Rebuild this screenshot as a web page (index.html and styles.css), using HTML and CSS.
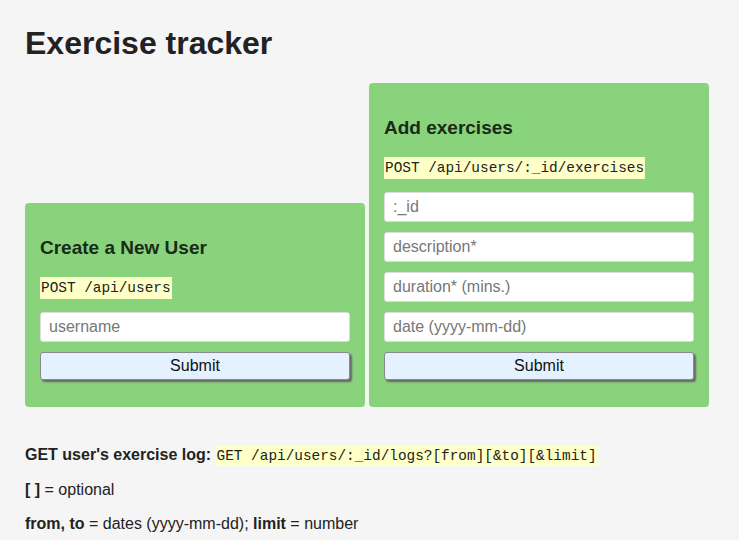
FILE: index.html
```html
<!DOCTYPE html>
<html lang="en">
<head>
<meta charset="utf-8">
<title>Exercise Tracker</title>
<link rel="stylesheet" href="styles.css">
</head>
<body>
<div class="container">
  <h1 class="title">Exercise tracker</h1>
  <div class="forms">
    <form class="card">
      <h3 class="card-title">Create a New User</h3>
      <p class="endpoint"><code class="code">POST /api/users</code></p>
      <input class="field" type="text" placeholder="username">
      <button class="submit" type="button">Submit</button>
    </form>
    <form class="card">
      <h3 class="card-title">Add exercises</h3>
      <p class="endpoint"><code class="code">POST /api/users/:_id/exercises</code></p>
      <input class="field" type="text" placeholder=":_id">
      <input class="field" type="text" placeholder="description*">
      <input class="field" type="text" placeholder="duration* (mins.)">
      <input class="field" type="text" placeholder="date (yyyy-mm-dd)">
      <button class="submit" type="button">Submit</button>
    </form>
  </div>
  <p class="note note-first"><strong>GET user's exercise log:</strong> <code class="code">GET /api/users/:_id/logs?[from][&amp;to][&amp;limit]</code></p>
  <p class="note"><strong>[ ]</strong> = optional</p>
  <p class="note"><strong>from, to</strong> = dates (yyyy-mm-dd); <strong>limit</strong> = number</p>
</div>
</body>
</html>
```
FILE: styles.css
```css
html, body {
  margin: 0;
  padding: 0;
}
body {
  background: #f5f5f5;
  color: #222;
  font-family: "Liberation Sans", Arial, sans-serif;
}
.container {
  padding: 25px 25px 0;
}
.title {
  margin: 0 0 21px;
  font-size: 32px;
  line-height: 37px;
  font-weight: bold;
}
.forms {
  display: flex;
  align-items: flex-end;
  gap: 4px;
}
.card {
  width: 310px;
  background: #88d37c;
  border-radius: 4px;
  padding: 15px 15px 27px;
  display: flex;
  flex-direction: column;
}
.card-title {
  margin: 19px 0 17px;
  font-size: 19px;
  line-height: 22px;
  font-weight: bold;
  color: #1a2a18;
}
.endpoint {
  margin: 0 0 14px;
  line-height: 22px;
  height: 22px;
}
.code {
  display: inline-block;
  background: #ffffc8;
  font-family: "Liberation Mono", "DejaVu Sans Mono", monospace;
  font-size: 14.4px;
  line-height: 22px;
  padding: 0 1px;
  color: #222;
}
.field {
  box-sizing: border-box;
  height: 30px;
  margin: 0 0 10px;
  padding: 0 8px;
  border: 1px solid #dcdcdc;
  border-radius: 3px;
  background: #fff;
  font-family: "Liberation Sans", Arial, sans-serif;
  font-size: 16px;
  color: #222;
}
.field::placeholder {
  color: #777;
}
.submit {
  box-sizing: border-box;
  height: 28px;
  width: 100%;
  margin: 0;
  border: 1px solid #8a8a8a;
  border-radius: 3px;
  background: #e4f1fe;
  box-shadow: 2px 2px 2px #666;
  font-family: "Liberation Sans", Arial, sans-serif;
  font-size: 16px;
  color: #111;
}
.note {
  margin: 0 0 14px;
  font-size: 16px;
  line-height: 20px;
}
.note-first {
  margin-top: 38px;
}
.note .code {
  line-height: 20px;
}
```
